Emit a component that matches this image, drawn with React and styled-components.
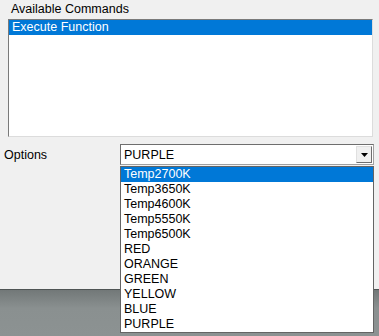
import React from 'react'
import styled, { createGlobalStyle } from 'styled-components'

const commands = ['Execute Function']
const options = [
  'Temp2700K',
  'Temp3650K',
  'Temp4600K',
  'Temp5550K',
  'Temp6500K',
  'RED',
  'ORANGE',
  'GREEN',
  'YELLOW',
  'BLUE',
  'PURPLE',
]

export default function App() {
  return (
    <>
      <GlobalStyle />
      <Page>
        <Panel>
          <Label>Available Commands</Label>
          <ListBox>
            {commands.map((c, i) => (
              <ListItem key={c} selected={i === 0}>
                {c}
              </ListItem>
            ))}
          </ListBox>
          <OptionsRow>
            <RowLabel>Options</RowLabel>
            <Combo>
              <ComboField>
                <ComboText>PURPLE</ComboText>
                <ComboButton>
                  <svg width="7" height="4" viewBox="0 0 7 4">
                    <path d="M0 0h7L3.5 4z" fill="#000" />
                  </svg>
                </ComboButton>
              </ComboField>
              <Popup>
                {options.map((o, i) => (
                  <PopupItem key={o} selected={i === 0}>
                    {o}
                  </PopupItem>
                ))}
              </Popup>
            </Combo>
          </OptionsRow>
        </Panel>
        <Footer />
      </Page>
    </>
  )
}

// Styles
const GlobalStyle = createGlobalStyle`
  body {
    margin: 0;
    background: #f0f0f0;
    font-family: "Liberation Sans", Arial, sans-serif;
    font-size: 12.5px;
    color: #000;
  }
`

const Page = styled.div`
  width: 379px;
  height: 336px;
  display: flex;
  flex-direction: column;
  overflow: hidden;
`

const Panel = styled.div`
  height: 289px;
  flex-shrink: 0;
  background: #f0f0f0;
  padding-top: 3px;
  box-sizing: border-box;
`

const Label = styled.div`
  margin-left: 11px;
  height: 16px;
  line-height: 13px;
`

const ListBox = styled.div`
  margin-left: 8px;
  width: 365px;
  height: 118px;
  box-sizing: border-box;
  background: #fff;
  border-top: 1px solid #7a7a7a;
  border-left: 1px solid #7a7a7a;
  border-right: 1px solid #dcdcdc;
  border-bottom: 1px solid #dcdcdc;
`

const ListItem = styled.div`
  height: 15px;
  line-height: 15px;
  padding-left: 3px;
  background: ${p => (p.selected ? '#0078d7' : 'transparent')};
  color: ${p => (p.selected ? '#fff' : '#000')};
`

const OptionsRow = styled.div`
  display: flex;
  align-items: center;
  margin-top: 7px;
`

const RowLabel = styled.div`
  width: 120px;
  padding-left: 4px;
  box-sizing: border-box;
`

const Combo = styled.div`
  position: relative;
  width: 254px;
`

const ComboField = styled.div`
  height: 21px;
  box-sizing: border-box;
  display: flex;
  align-items: center;
  background: #fff;
  border: 1px solid #6e6e6e;
  border-right-color: #a0a0a0;
  border-bottom-color: #a0a0a0;
`

const ComboText = styled.div`
  flex: 1;
  padding-left: 3px;
`

const ComboButton = styled.div`
  width: 16px;
  height: 17px;
  margin-right: 1px;
  box-sizing: border-box;
  display: flex;
  align-items: center;
  justify-content: center;
  background: #f0f0f0;
  border: 1px solid #6e6e6e;
  border-top-color: #e0e0e0;
  border-left-color: #e0e0e0;
`

const Popup = styled.div`
  position: absolute;
  left: 0;
  top: 22px;
  width: 254px;
  box-sizing: border-box;
  background: #fff;
  border: 1px solid #646464;
  z-index: 2;
`

const PopupItem = styled.div`
  height: 15px;
  line-height: 15px;
  padding-left: 3px;
  background: ${p => (p.selected ? '#0078d7' : 'transparent')};
  color: ${p => (p.selected ? '#fff' : '#000')};
`

const Footer = styled.div`
  flex: 1;
  border-top: 1px solid #4e5454;
  background: linear-gradient(#727878, #8a9090 40%, #8c9292);
`
